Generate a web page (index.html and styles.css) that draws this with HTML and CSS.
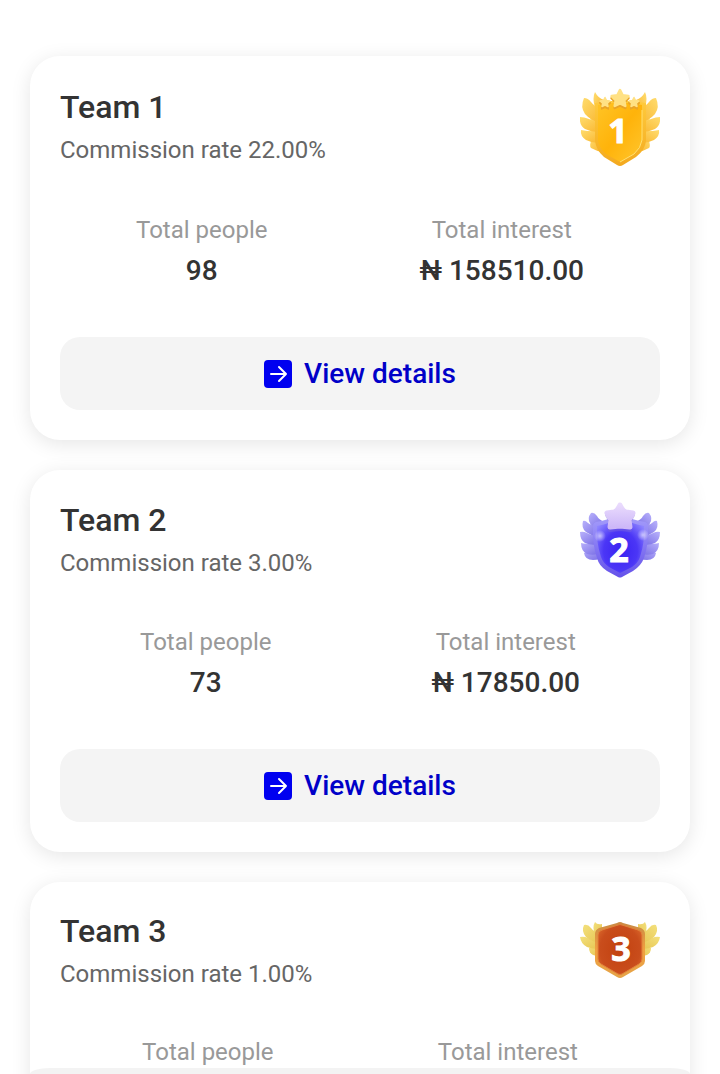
FILE: index.html
```html
<!DOCTYPE html>
<html lang="en">
  <head>
    <meta charset="UTF-8" />
    <meta name="viewport" content="width=device-width, initial-scale=1.0" />
    <title>My Team</title>
    <link rel="stylesheet" href="styles.css">
  </head>
  <body>
    <main class="teams">
      <section class="card">
        <div class="card-head">
          <div class="card-title">
            <h2>Team 1</h2>
            <p>Commission rate 22.00%</p>
          </div>
          <svg class="badge" viewBox="0 0 80 82" role="img" aria-label="Level 1">
            <defs>
              <linearGradient id="gold" x1="0" y1="0" x2="1" y2="1">
                <stop offset="0" stop-color="#ffc426" />
                <stop offset="0.5" stop-color="#ffb30a" />
                <stop offset="1" stop-color="#ffc62e" />
              </linearGradient>
              <linearGradient id="goldRim" x1="0" y1="0" x2="0" y2="1">
                <stop offset="0" stop-color="#ffcb3d" />
                <stop offset="1" stop-color="#f3a91f" />
              </linearGradient>
              <linearGradient id="goldWing" x1="0" y1="0" x2="1" y2="1">
                <stop offset="0" stop-color="#ffdc6e" />
                <stop offset="1" stop-color="#f9b42c" />
              </linearGradient>
              <g id="wing1" fill="url(#goldWing)">
                <path d="M15 6Q12 12 15 22L24 30V14Q18 12 15 6Z" />
                <path d="M10 28L22 24V68L12 58Z" />
                <path d="M12 52Q9 60 11 62Q16 65 23 66V50Z" />
                <path d="M1 44Q0 50 6 54Q14 58 22 56V45Q10 46 1 44Z" />
                <path d="M0 31Q-1 39 5 43Q13 47 22 46V36Q14 36 9 33Q4 31 0 31Z" />
                <path d="M4 12Q0 21 5 28Q10 34 22 38V24Q15 21 11 16Q8 12 4 12Z" />
              </g>
              <path id="star" d="M0 -7.500L2.500 -2.500L8 -1.800L4 2.200L5 7.500L0 5L-5 7.500L-4 2.200L-8 -1.800L-2.500 -2.500Z" stroke-linejoin="round" stroke-width="2.500" />
            </defs>
            <use href="#wing1" />
            <use href="#wing1" transform="matrix(-1 0 0 1 80 0)" />
            <path d="M15 17Q40 12 66 17V55Q65 64 56 71L43 79Q40 81 37 79L24 71Q16 64 15 55Z" fill="url(#goldRim)" />
            <path d="M18 19Q40 14 62 19V54Q61 62 54 68L40 76L26 68Q19 62 18 54Z" fill="url(#gold)" />
            <path d="M62 24V54Q61 62 54 68L40 76" fill="none" stroke="#ffdf70" stroke-width="1" />
            <g fill="#e9a428" stroke="#e9a428">
              <use href="#star" transform="translate(25 18) scale(0.65)" />
              <use href="#star" transform="translate(54 18) scale(0.65)" />
              <use href="#star" transform="translate(40 14) scale(1.05)" />
            </g>
            <g fill="#ffe184" stroke="#ffe184">
              <use href="#star" transform="translate(25 16) scale(0.6)" />
              <use href="#star" transform="translate(54 16) scale(0.6)" />
              <use href="#star" transform="translate(40 12) scale(1.05)" />
            </g>
            <text class="badge-num" x="38" y="57">1</text>
          </svg>
        </div>
        <dl class="stats">
          <div class="stat">
            <dt>Total people</dt>
            <dd>98</dd>
          </div>
          <div class="stat">
            <dt>Total interest</dt>
            <dd>₦ 158510.00</dd>
          </div>
        </dl>
        <button type="button" class="details">
          <svg class="arrow" viewBox="0 0 28 28" aria-hidden="true">
            <rect width="28" height="28" rx="4" fill="#0000f0" />
            <path d="M7 14H22M15 7L22 14L15 21" />
          </svg>
          View details
        </button>
      </section>

      <section class="card">
        <div class="card-head">
          <div class="card-title">
            <h2>Team 2</h2>
            <p>Commission rate 3.00%</p>
          </div>
          <svg class="badge" viewBox="0 0 80 80" role="img" aria-label="Level 2">
            <defs>
              <radialGradient id="violet" cx="0.5" cy="0.6" r="0.65">
                <stop offset="0" stop-color="#3a22f2" />
                <stop offset="0.55" stop-color="#4b36f6" />
                <stop offset="1" stop-color="#8f86ff" />
              </radialGradient>
              <linearGradient id="violetRim" x1="0" y1="0" x2="0" y2="1">
                <stop offset="0" stop-color="#a7a0fb" />
                <stop offset="1" stop-color="#6552ea" />
              </linearGradient>
              <linearGradient id="violetWing" x1="0" y1="0" x2="1" y2="1">
                <stop offset="0" stop-color="#b9b2fb" />
                <stop offset="1" stop-color="#7468e4" />
              </linearGradient>
              <linearGradient id="pinkStar" x1="0" y1="0" x2="0" y2="1">
                <stop offset="0" stop-color="#e9dafd" />
                <stop offset="1" stop-color="#cdb8f8" />
              </linearGradient>
              <radialGradient id="glow">
                <stop offset="0" stop-color="#fff" stop-opacity="0.6" />
                <stop offset="1" stop-color="#fff" stop-opacity="0" />
              </radialGradient>
              <g id="wing2" fill="url(#violetWing)">
                <path d="M10 20L24 26V62L12 56Z" />
                <path d="M4 53Q5 60 13 60Q20 60 25 56L16 48Z" />
                <path d="M1 43Q1 51 7 54Q14 56 22 53L16 42Q7 45 1 43Z" />
                <path d="M0 32Q0 40 5 43Q11 46 20 44V36Q12 36 7 33Q3 31 0 32Z" />
                <path d="M3 21Q1 28 6 32Q12 36 20 37V27Q12 26 8 23Q5 20 3 21Z" />
                <path d="M11 13Q7 18 10 23Q13 28 20 28L25 22Q19 20 17 16Q14 12 11 13Z" />
              </g>
            </defs>
            <use href="#wing2" />
            <use href="#wing2" transform="matrix(-1 0 0 1 80 0)" />
            <path d="M40 14Q29 20 16 22Q13 23 13 26Q12 43 17 58Q19 66 27 71L38 77Q40 78 42 77L53 71Q61 66 64 58Q69 43 68 26Q68 23 65 22Q52 20 40 14Z" fill="url(#violetRim)" />
            <path d="M40 18Q31 23 17 26Q16 42 21 57Q23 63 29 67L40 73L52 67Q58 63 60 57Q65 42 64 26Q50 23 40 18Z" fill="url(#violet)" />
            <circle cx="20" cy="36" r="6" fill="url(#glow)" />
            <circle cx="63" cy="35" r="6" fill="url(#glow)" />
            <path d="M40 7Q43 13 46 14L53 15L49 22L50 30L40 29L30 30L31 22L27 15L34 14Q37 13 40 7Z" fill="#7d68d8" stroke="#7d68d8" stroke-width="4" stroke-linejoin="round" opacity="0.4" />
            <path d="M40 5Q43 11 46 12L53 13L49 20L50 27L40 26L30 27L31 20L27 13L34 12Q37 11 40 5Z" fill="url(#pinkStar)" stroke="url(#pinkStar)" stroke-width="5" stroke-linejoin="round" />
            <text class="badge-num" x="39" y="62">2</text>
          </svg>
        </div>
        <dl class="stats">
          <div class="stat">
            <dt>Total people</dt>
            <dd>73</dd>
          </div>
          <div class="stat">
            <dt>Total interest</dt>
            <dd>₦ 17850.00</dd>
          </div>
        </dl>
        <button type="button" class="details">
          <svg class="arrow" viewBox="0 0 28 28" aria-hidden="true">
            <rect width="28" height="28" rx="4" fill="#0000f0" />
            <path d="M7 14H22M15 7L22 14L15 21" />
          </svg>
          View details
        </button>
      </section>

      <section class="card">
        <div class="card-head">
          <div class="card-title">
            <h2>Team 3</h2>
            <p>Commission rate 1.00%</p>
          </div>
          <svg class="badge" viewBox="0 0 80 78" role="img" aria-label="Level 3">
            <defs>
              <radialGradient id="bronze" cx="0.5" cy="0.5" r="0.65">
                <stop offset="0" stop-color="#c2410f" />
                <stop offset="0.7" stop-color="#c94d1c" />
                <stop offset="1" stop-color="#dc6a2c" />
              </radialGradient>
              <linearGradient id="bronzeRim" x1="0" y1="0" x2="0" y2="1">
                <stop offset="0" stop-color="#c98a45" />
                <stop offset="0.5" stop-color="#f0a040" />
                <stop offset="1" stop-color="#e5a448" />
              </linearGradient>
              <linearGradient id="bronzeWing" x1="0" y1="0" x2="1" y2="1">
                <stop offset="0" stop-color="#f3e07c" />
                <stop offset="1" stop-color="#e6c450" />
              </linearGradient>
              <g id="wing3" fill="url(#bronzeWing)">
                <path d="M15 10Q12 15 15 22L22 27V12Q17 13 15 10Z" />
                <path d="M9 36Q9 41 13 43Q17 44 22 43V33Z" />
                <path d="M0 25Q1 32 7 35Q14 38 22 36V28Q12 28 8 26Q4 24 0 25Z" />
                <path d="M4 13Q1 19 6 25Q12 30 22 32V22Q14 20 11 16Q8 12 4 13Z" />
              </g>
            </defs>
            <use href="#wing3" />
            <use href="#wing3" transform="matrix(-1 0 0 1 80 0)" />
            <path d="M37 11Q40 9 43 11L61 16Q65 18 65 22V49Q65 52 62 54L43 65Q40 67 37 65L18 54Q15 52 15 49V22Q15 18 19 16Z" fill="url(#bronzeRim)" />
            <path d="M38 13Q40 12 42 13L58 18Q62 19 62 23V47Q62 50 59 52L42 62Q40 63 38 62L21 52Q18 50 18 47V23Q18 19 22 18Z" fill="url(#bronze)" stroke="#e2803a" stroke-width="1" />
            <text class="badge-num" x="41" y="49">3</text>
          </svg>
        </div>
        <dl class="stats">
          <div class="stat">
            <dt>Total people</dt>
            <dd></dd>
          </div>
          <div class="stat">
            <dt>Total interest</dt>
            <dd></dd>
          </div>
        </dl>
      </section>
    </main>
    <div class="tabbar"></div>
  </body>
</html>
```
FILE: styles.css
```css
* {
  box-sizing: border-box;
}

body {
  margin: 0;
  background-color: #fff;
  color: #333;
  font-family: Roboto, sans-serif;
}

h2,
p,
dl,
dd {
  margin: 0;
}

.teams {
  height: 100vh;
  overflow: hidden;
  padding: 56px 30px 0;
}

.card {
  margin-bottom: 30px;
  padding: 30px;
  border-radius: 30px;
  background-color: #fff;
  box-shadow: 0 4px 20px rgba(0, 0, 0, 0.1);
}

.card-head {
  display: flex;
  justify-content: space-between;
  align-items: center;
}

.card-title {
  padding-bottom: 2px;
}

.card-title h2 {
  font-size: 32px;
  line-height: 38px;
  font-weight: 500;
}

.card-title p {
  margin-top: 10px;
  font-size: 24px;
  line-height: 28px;
  color: #666;
}

.badge {
  display: block;
  width: 80px;
}

.badge-num {
  fill: #fff;
  stroke: #fff;
  stroke-width: 1;
  font-family: "Noto Sans", sans-serif;
  font-size: 34px;
  font-weight: 700;
  text-anchor: middle;
}

.stats {
  display: flex;
  justify-content: space-around;
  padding: 48px 0 50px;
  text-align: center;
}

.stat dt {
  font-size: 24px;
  line-height: 28px;
  color: #999;
}

.stat dd {
  margin-top: 10px;
  font-size: 28px;
  line-height: 33px;
  font-weight: 500;
}

.details {
  display: flex;
  justify-content: center;
  align-items: center;
  gap: 12px;
  width: 100%;
  padding: 20px;
  border: none;
  border-radius: 20px;
  background-color: #f4f4f4;
  color: #0000c8;
  font-family: inherit;
  font-size: 28px;
  line-height: 33px;
  font-weight: 500;
  cursor: pointer;
}

.arrow {
  width: 28px;
  height: 28px;
  fill: none;
  stroke: #fff;
  stroke-width: 2;
  stroke-linecap: round;
  stroke-linejoin: round;
}

.arrow rect {
  stroke: none;
}

/* top edge of the bar that floats over the list */
.tabbar {
  position: fixed;
  left: 30px;
  right: 30px;
  bottom: 0;
  height: 6px;
  border-radius: 20px 20px 0 0 / 6px 6px 0 0;
  background-color: #f3f3f3;
}
```
